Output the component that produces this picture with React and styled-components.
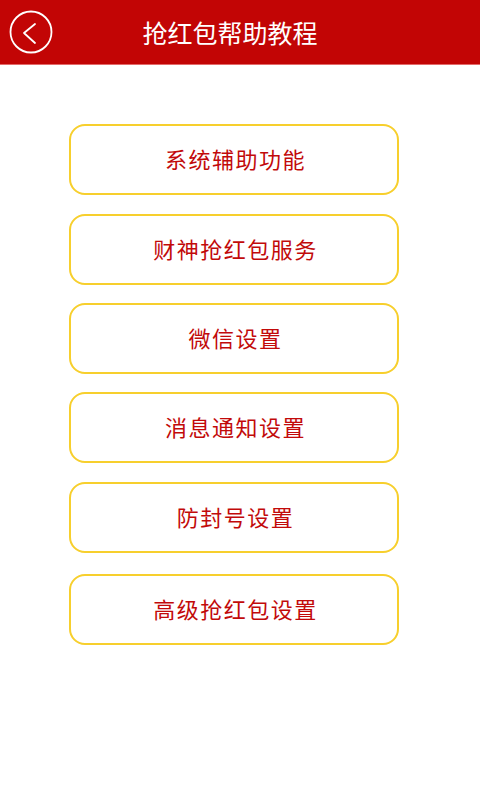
import React from "react";
import styled, { createGlobalStyle } from "styled-components";

const Global = createGlobalStyle`
  html, body { margin: 0; padding: 0; background: #fff; }
  body { font-family: "Noto Sans CJK SC", "Noto Sans", sans-serif; }
`;

const Page = styled.div`
  width: 480px;
  min-height: 800px;
  background: #fff;
`;

const Header = styled.header`
  height: 64px;
  background: #c20505;
  border-bottom: 1px solid #e46a6a;
  display: flex;
  align-items: center;
  position: relative;
`;

const BackButton = styled.button`
  width: 44px;
  height: 44px;
  margin-left: 9px;
  padding: 0;
  border: none;
  background: transparent;
  display: flex;
  align-items: center;
  justify-content: center;
  cursor: pointer;
`;

const Title = styled.h1`
  position: absolute;
  left: 0;
  right: 20px;
  top: 0;
  bottom: 0;
  margin: 0;
  display: flex;
  align-items: center;
  justify-content: center;
  color: #fff;
  font-size: 25px;
  font-weight: 400;
  pointer-events: none;
`;

const List = styled.div`
  display: flex;
  flex-direction: column;
  align-items: flex-start;
  gap: 19px;
  padding: 59px 0 0 69px;
`;

const Item = styled.button`
  width: 330px;
  height: 71px;
  box-sizing: border-box;
  border: 2px solid #f7cf2d;
  border-radius: 16px;
  background: #fff;
  color: #c20a0a;
  font-family: "Noto Sans CJK SC", "Noto Sans", sans-serif;
  font-size: 22px;
  letter-spacing: 1.5px;
  display: flex;
  align-items: center;
  justify-content: center;
  padding: 0 0 3px 3px;
  margin-top: ${(p) => p.$extra || 0}px;
  cursor: pointer;
`;

const items = [
  { label: "系统辅助功能" },
  { label: "财神抢红包服务", extra: 0 },
  { label: "微信设置", extra: -1 },
  { label: "消息通知设置", extra: -1 },
  { label: "防封号设置", extra: 0 },
  { label: "高级抢红包设置", extra: 2 },
];

export default function App() {
  return (
    <Page>
      <Global />
      <Header>
        <BackButton aria-label="back">
          <svg width="44" height="44" viewBox="0 0 44 44">
            <circle cx="22" cy="22" r="20.5" fill="none" stroke="#fff" strokeWidth="1.8" />
            <polyline
              points="26,14 15,23 26,33"
              fill="none"
              stroke="#fff"
              strokeWidth="1.8"
              strokeLinecap="round"
              strokeLinejoin="round"
            />
          </svg>
        </BackButton>
        <Title>抢红包帮助教程</Title>
      </Header>
      <List>
        {items.map((it) => (
          <Item key={it.label} $extra={it.extra}>
            {it.label}
          </Item>
        ))}
      </List>
    </Page>
  );
}
